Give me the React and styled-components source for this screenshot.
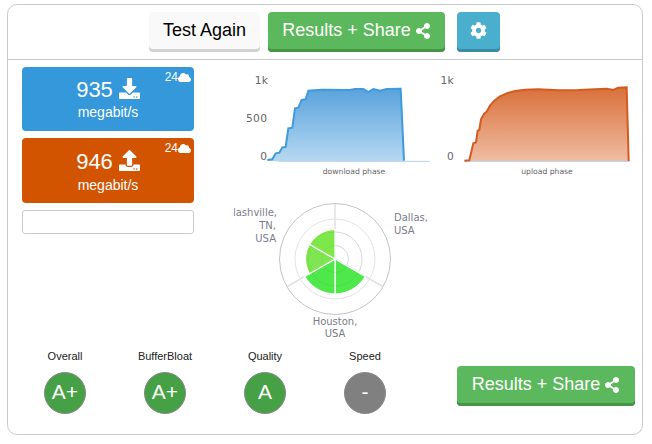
import React from 'react';
import styled, { createGlobalStyle } from 'styled-components';
import { FaDownload, FaUpload, FaShareAlt, FaCog, FaCloud } from 'react-icons/fa';

const Global = createGlobalStyle`
  html, body { margin: 0; padding: 0; background: #fff; }
  body { font-family: "Liberation Sans", Arial, sans-serif; width: 652px; height: 444px; overflow: hidden; }
`;

const Card = styled.div`
  box-sizing: border-box;
  width: 636px;
  height: 431px;
  margin: 4px 0 0 7px;
  border: 1px solid #ccc;
  border-radius: 10px;
  display: flex;
  flex-direction: column;
`;

const Toolbar = styled.div`
  box-sizing: border-box;
  height: 55px;
  flex: none;
  border-bottom: 1px solid #ccc;
  padding: 7px 0 0 141px;
  display: flex;
  align-items: flex-start;
`;

const palette = {
  plain: { bg: '#f9f9f9', edge: '#d2d2d2', fg: '#000' },
  green: { bg: '#5cb85c', edge: '#479547', fg: '#fff' },
  blue: { bg: '#4aafcd', edge: '#3d8aa3', fg: '#fff' },
};

const Button = styled.button`
  box-sizing: border-box;
  height: 40px;
  width: ${(p) => p.$w}px;
  margin-right: ${(p) => p.$gap || 0}px;
  flex: none;
  padding: 0 0 3px;
  border: 0;
  border-radius: 4px;
  background: ${(p) => palette[p.$kind].bg};
  color: ${(p) => palette[p.$kind].fg};
  box-shadow: inset 0 -3px 0 ${(p) => palette[p.$kind].edge};
  font: 18px "Liberation Sans", Arial, sans-serif;
  display: inline-flex;
  align-items: center;
  justify-content: center;
  gap: 4px;
`;

const Body = styled.div`
  flex: 1;
  display: flex;
  flex-direction: column;
  min-height: 0;
`;

const Upper = styled.div`
  flex: none;
  height: 286px;
  display: flex;
`;

const LeftCol = styled.div`
  width: 172px;
  margin: 7px 0 0 14px;
  display: flex;
  flex-direction: column;
  gap: 7px;
  flex: none;
`;

const Tile = styled.div`
  position: relative;
  box-sizing: border-box;
  height: ${(p) => p.$h}px;
  background: ${(p) => p.$bg};
  border-radius: 4px;
  color: #fff;
  display: flex;
  flex-direction: column;
  align-items: center;
  padding-top: ${(p) => p.$pad}px;
`;

const Value = styled.div`
  font-size: 22px;
  line-height: 28px;
  display: flex;
  align-items: center;
  gap: 6px;
  svg { margin-bottom: 3px; }
`;

const Unit = styled.div`
  font-size: 14px;
  line-height: 18px;
  margin-top: ${(p) => p.$nudge || 0}px;
`;

const Badge = styled.div`
  position: absolute;
  top: 3px;
  right: 3px;
  font-size: 12px;
  line-height: 14px;
  display: flex;
  align-items: center;
`;

const EmptyBox = styled.div`
  box-sizing: border-box;
  height: 24px;
  border: 1px solid #ccc;
  border-radius: 3px;
`;

const Charts = styled.div`
  margin-left: 41px;
  width: 405px;
  display: flex;
  flex-direction: column;
`;

const ChartRow = styled.div`
  display: flex;
  margin-top: 5px;
  height: 130px;
`;

const ChartSvg = styled.svg`
  width: 205px;
  height: 115px;
  flex: none;
  margin-right: -5px;
  display: block;
  font-family: "DejaVu Sans", sans-serif;
`;

const RadarWrap = styled.div`
  margin-left: -1px;
`;

const RadarSvg = styled.svg`
  width: 210px;
  height: 150px;
  display: block;
  font-family: "DejaVu Sans", sans-serif;
`;

const Lower = styled.div`
  flex: 1;
  display: flex;
  align-items: flex-start;
`;

const Grades = styled.div`
  margin-left: 7px;
  padding-top: 4px;
  display: flex;
  flex: none;
  width: 400px;
`;

const Grade = styled.div`
  width: 100px;
  display: flex;
  flex-direction: column;
  align-items: center;
  font-size: 11px;
  line-height: 13px;
  color: #222;
`;

const Circle = styled.div`
  box-sizing: border-box;
  width: 42px;
  height: 42px;
  margin-top: 9px;
  padding-bottom: 3px;
  border-radius: 50%;
  border: 1px solid #888;
  background: ${(p) => (p.$off ? '#808080' : '#46a046')};
  color: #fff;
  font-size: 21px;
  display: flex;
  align-items: center;
  justify-content: center;
`;

const BottomAction = styled.div`
  margin-left: 42px;
  padding-top: 20px;
`;

const dl = '97,285 112,283 122,265 133,263 142,247 152,246 160,190 172,188 180,130 190,128 200,105 212,103 220,77 260,74 345,75 360,72 385,72 400,81 415,72 435,77 455,72 497,71 507,287';
const ul = '88,287 103,286 115,235 123,232 128,197 133,195 138,163 147,147 155,140 165,122 178,107 195,94 215,85 240,78 270,74 310,73 370,76 430,75 480,73 515,71 535,75 550,68 575,67 581,288';

function PhaseChart({ id, points, start, top, bottom, line, labels, title, titleX, areaStart, end }) {
  return (
    <ChartSvg viewBox="0 0 615 345">
      <defs>
        <linearGradient id={id} x1="0" y1="0" x2="0" y2="1">
          <stop offset="0" stopColor={top} />
          <stop offset="1" stopColor={bottom} />
        </linearGradient>
      </defs>
      <polygon points={`${areaStart},289 ${points} ${end},289`} fill={`url(#${id})`} />
      <line x1={start} y1="289" x2="585" y2="289" stroke="#b8d4ea" strokeWidth="3" />
      <polyline points={points} fill="none" stroke={line} strokeWidth="6" />
      {labels.map(([t, x, y]) => (
        <text key={t} x={x} y={y} textAnchor="end" fontSize="32" fill="#666666" letterSpacing="1">{t}</text>
      ))}
      <text x={titleX} y="327" textAnchor="middle" fontSize="23" fill="#666666">{title}</text>
    </ChartSvg>
  );
}

const cx = 101, cy = 64;
const polar = (r, deg) => {
  const a = (deg * Math.PI) / 180;
  return [cx + r * Math.sin(a), cy - r * Math.cos(a)];
};
const sector = (r, a, b) => {
  const [x1, y1] = polar(r, a);
  const [x2, y2] = polar(r, b);
  return `M${cx},${cy}L${x1},${y1}A${r},${r} 0 0 1 ${x2},${y2}Z`;
};

function Radar() {
  const spokes = [0, 120, 240];
  const sectors = [
    [35, 120, 180, '#4ee84a'],
    [35, 180, 240, '#4ee84a'],
    [29.5, 240, 300, '#7ee650'],
    [29.5, 300, 360, '#7ee84a'],
  ];
  return (
    <RadarSvg viewBox="0 0 210 150">
      {[13.5, 27, 40].map((r) => (
        <circle key={r} cx={cx} cy={cy} r={r} fill="none" stroke="#e4e4e4" strokeWidth="1" />
      ))}
      <circle cx={cx} cy={cy} r="55.5" fill="none" stroke="#c4c4c4" strokeWidth="1" />
      {spokes.map((d) => {
        const [x, y] = polar(55, d);
        return <line key={d} x1={cx} y1={cy} x2={x} y2={y} stroke="#e2e2e2" strokeWidth="1.5" />;
      })}
      {sectors.map(([r, a, b, c]) => (
        <path key={a} d={sector(r, a, b)} fill={c} stroke="#fff" strokeWidth="1.2" />
      ))}
      {[13.5, 27].map((r) => (
        <circle key={r} cx={cx} cy={cy} r={r} fill="none" stroke="#000" strokeOpacity="0.05" strokeWidth="1" />
      ))}
      <g fontSize="10" fill="#7c7c8a">
        <text textAnchor="end" x="43" y="21">Nashville,</text>
        <text textAnchor="end" x="42" y="34">TN,</text>
        <text textAnchor="end" x="42" y="47">USA</text>
        <text x="160" y="26">Dallas,</text>
        <text x="160" y="39">USA</text>
        <text textAnchor="middle" x="101" y="129.5">Houston,</text>
        <text textAnchor="middle" x="101" y="142">USA</text>
      </g>
    </RadarSvg>
  );
}

const grades = [
  ['Overall', 'A+'],
  ['BufferBloat', 'A+'],
  ['Quality', 'A'],
  ['Speed', '-'],
];

export default function App() {
  return (
    <>
      <Global />
      <Card>
        <Toolbar>
          <Button $kind="plain" $w={111} $gap={8}>Test Again</Button>
          <Button $kind="green" $w={177} $gap={12}>Results + Share <FaShareAlt size={16} /></Button>
          <Button $kind="blue" $w={43}><FaCog size={17} /></Button>
        </Toolbar>
        <Body>
          <Upper>
            <LeftCol>
              <Tile $h={64} $pad={9} $bg="#3498db">
                <Badge>24<FaCloud size={13} /></Badge>
                <Value>935 <FaDownload size={21} /></Value>
                <Unit $nudge={-1}>megabit/s</Unit>
              </Tile>
              <Tile $h={65} $pad={10} $bg="#d35400">
                <Badge>24<FaCloud size={13} /></Badge>
                <Value>946 <FaUpload size={21} /></Value>
                <Unit>megabit/s</Unit>
              </Tile>
              <EmptyBox />
            </LeftCol>
            <Charts>
              <ChartRow>
                <PhaseChart id="dl" points={dl} start={130} areaStart={112} end={507} top="#5aa3dd" bottom="#b6d8f1" line="#3f9bdc" title="download phase" titleX={357}
                  labels={[['1k', 100, 56], ['500', 97, 172], ['0', 97, 286]]} />
                <PhaseChart id="ul" points={ul} start={90} areaStart={103} end={581} top="#d9703a" bottom="#f0bda3" line="#d35b1e" title="upload phase" titleX={336}
                  labels={[['1k', 57, 56], ['0', 57, 286]]} />
              </ChartRow>
              <RadarWrap><Radar /></RadarWrap>
            </Charts>
          </Upper>
          <Lower>
            <Grades>
              {grades.map(([label, value]) => (
                <Grade key={label}>
                  {label}
                  <Circle $off={value === '-'}>{value}</Circle>
                </Grade>
              ))}
            </Grades>
            <BottomAction>
              <Button $kind="green" $w={178}>Results + Share <FaShareAlt size={16} /></Button>
            </BottomAction>
          </Lower>
        </Body>
      </Card>
    </>
  );
}
